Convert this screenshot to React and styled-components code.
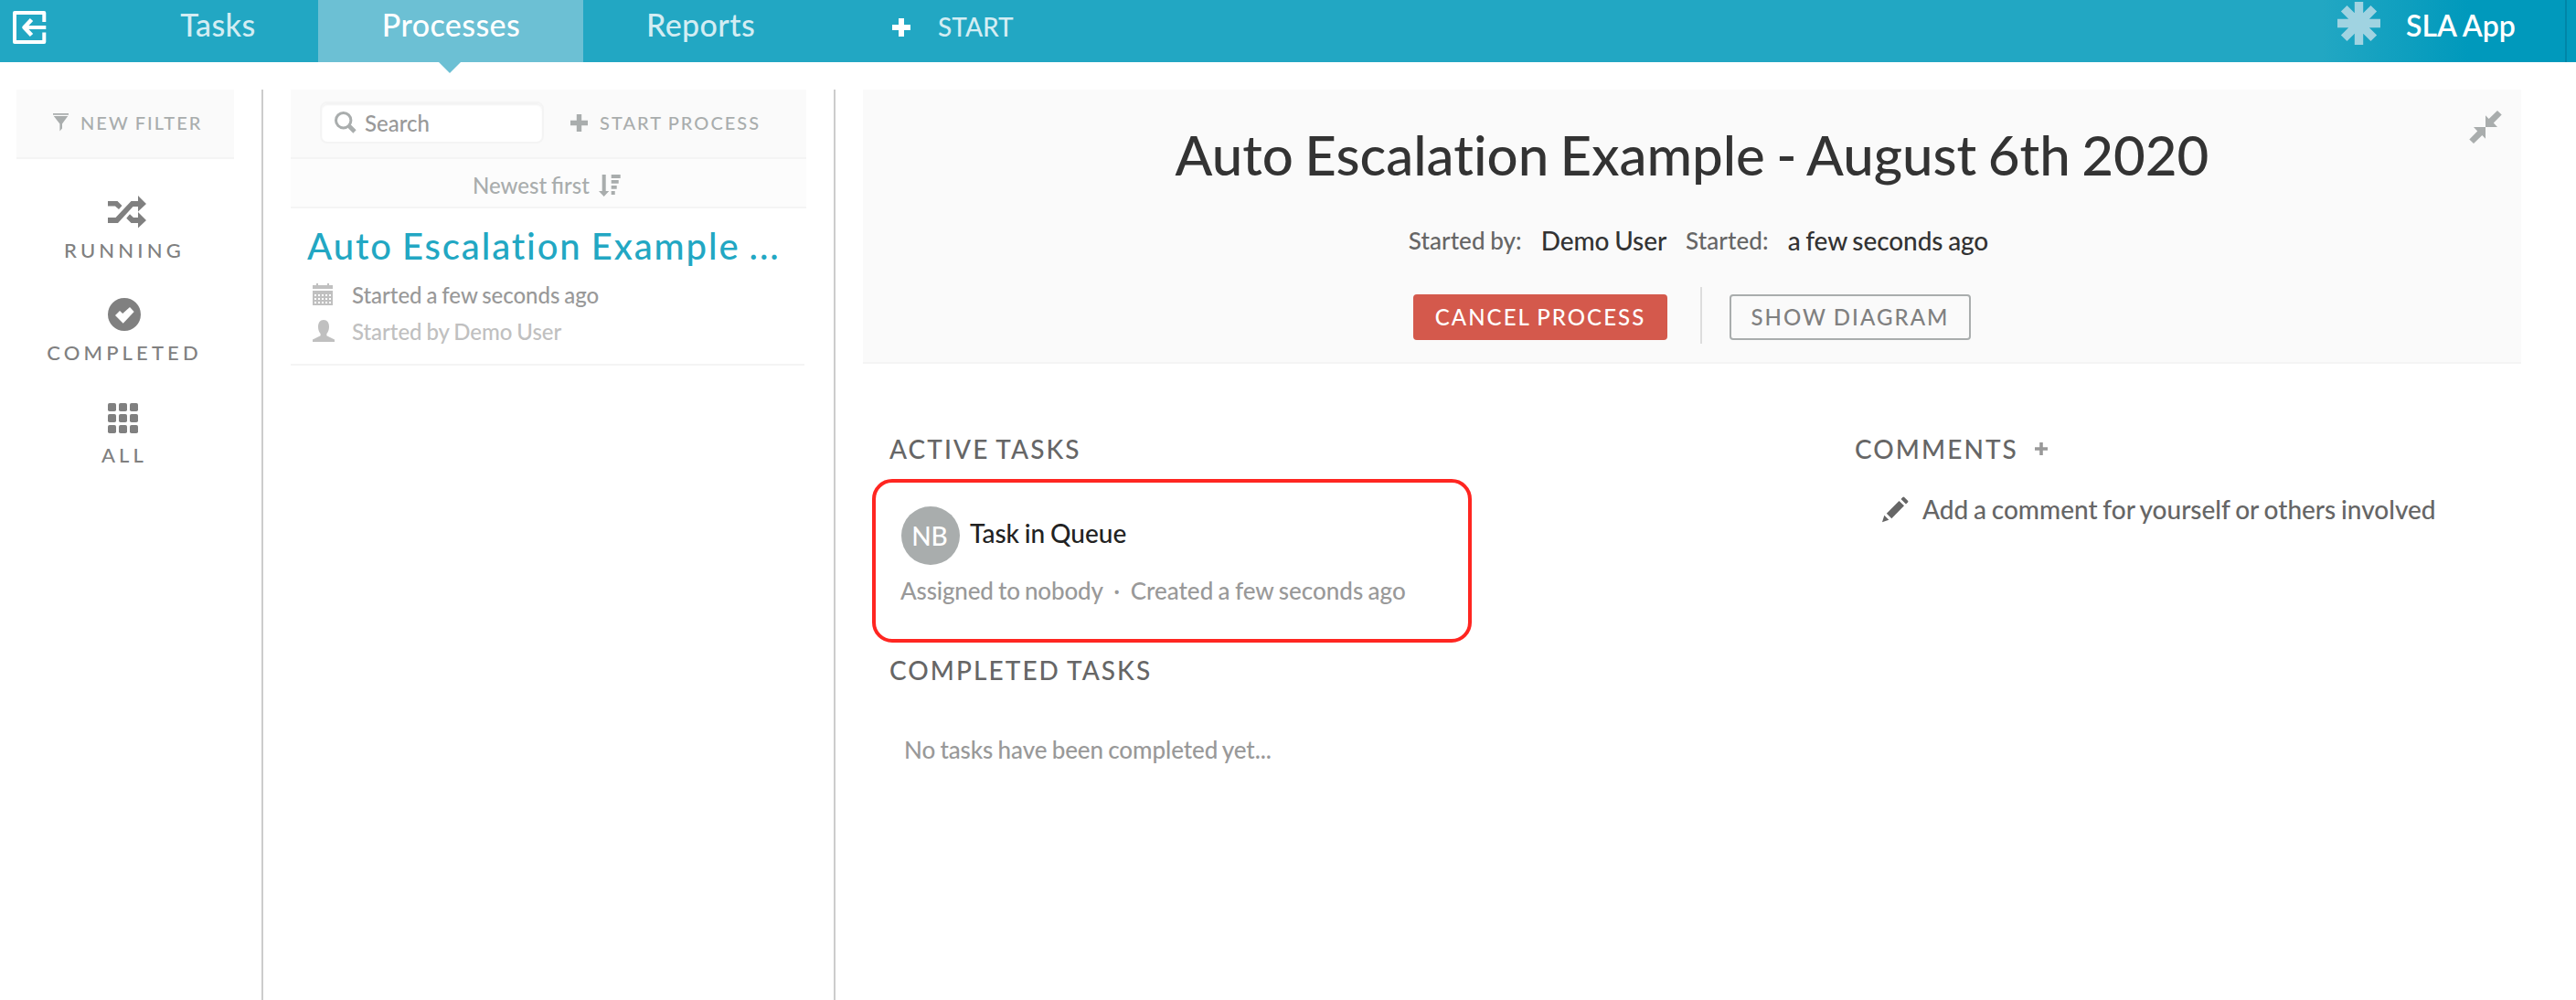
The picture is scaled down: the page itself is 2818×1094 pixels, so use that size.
import React from "react";
import styled, { createGlobalStyle } from "styled-components";

const GlobalStyle = createGlobalStyle`
  * { box-sizing: border-box; word-spacing: -0.046em; }
  body {
    margin: 0;
    background: #fff;
    color: #333;
    font-family: Lato, "Open Sans", sans-serif;
    font-weight: 500;
    font-variant-ligatures: none;
    overflow: hidden;
  }
  svg { display: block; flex: none; overflow: visible; }
  h1, h2, h3, p { margin: 0; font-weight: inherit; }
  button { font-family: inherit; font-weight: inherit; cursor: pointer; }
`;

/* ---------- layout ---------- */

const Page = styled.div`
  display: flex;
  flex-direction: column;
  height: 1094px;
  white-space: nowrap;
`;

const Header = styled.header`
  display: flex;
  flex: none;
  height: 68px;
  background: linear-gradient(to right, #22a7c3 0, #22a7c3 2540px, #0099bc 2700px);
  color: #d3edf3;
`;

const Body = styled.div`
  display: flex;
  flex: 1;
  padding-top: 30px;
`;

const Sidebar = styled.aside`
  width: 288px;
  padding: 0 30px 0 18px;
  border-right: 2px solid #ccc;
`;

const ListColumn = styled.section`
  width: 626px;
  padding: 0 30px;
  border-right: 2px solid #ccc;
`;

const Main = styled.main`
  width: 1814px;
  margin-left: 30px;
`;

/* ---------- header ---------- */

const ExitLink = styled.a`
  width: 128px;
  padding: 12px 0 0 14px;
`;

const Tab = styled.a`
  position: relative;
  width: ${(p) => p.$width}px;
  padding-left: 1px;
  text-align: center;
  font-size: 34px;
  line-height: 54px;
  letter-spacing: 0.4px;
  background: ${(p) => (p.$active ? "#6cc0d4" : "transparent")};
  color: ${(p) => (p.$active ? "#fff" : "#d3edf3")};

  &::after {
    content: ${(p) => (p.$active ? '""' : "none")};
    position: absolute;
    top: 68px;
    left: 50%;
    margin-left: -13px;
    border: 12px solid transparent;
    border-top-color: #6cc0d4;
    border-bottom: 0;
  }
`;

const StartLink = styled.a`
  display: flex;
  gap: 30px;
  margin-left: 82px;
  font-size: 28px;
  line-height: 58px;
`;

const StartGlyph = styled.span`
  padding-top: 20px;
`;

const AppBrand = styled.div`
  display: flex;
  gap: 28px;
  width: 251px;
  margin-left: auto;
  border-right: 2px solid #0086a8;
  color: #fff;
  font-size: 32px;
  font-weight: 600;
  line-height: 55px;
  word-spacing: 0;
`;

const BrandMark = styled.span`
  padding-top: 2px;
`;

const HeaderEnd = styled.div`
  width: 10px;
`;

/* ---------- sidebar ---------- */

const FilterButton = styled.a`
  display: flex;
  align-items: center;
  gap: 13px;
  height: 76px;
  padding: 0 0 2px 40px;
  border-bottom: 2px solid #f4f4f4;
  background: #fafafa;
  color: #a9adad;
  font-size: 20px;
  letter-spacing: 2.05px;
`;

const FilterList = styled.nav`
  display: flex;
  flex-direction: column;
  padding-top: 30px;
`;

const FilterItem = styled.a`
  display: flex;
  flex-direction: column;
  align-items: center;
  height: 112px;
  color: #808080;
  font-size: 22px;
  line-height: 31px;
`;

const FilterGlyph = styled.span`
  width: 38px;
  height: 54px;
  padding-top: ${(p) => p.$top}px;
`;

const FilterLabel = styled.span`
  padding-right: 2px;
  letter-spacing: 4.15px;
`;

/* ---------- process list ---------- */

const ListToolbar = styled.div`
  display: flex;
  align-items: center;
  height: 76px;
  padding: 0 0 2px 32px;
  border-bottom: 2px solid #f4f4f4;
  background: #fafafa;
`;

const SearchField = styled.label`
  display: flex;
  align-items: center;
  gap: 9px;
  width: 245px;
  height: 46px;
  padding-left: 14px;
  border: 2px solid #f4f4f4;
  border-radius: 8px;
  background: #fff;
  box-shadow: inset 0 2px 2px rgba(0, 0, 0, 0.05);
  color: #999;
  font-size: 24px;
`;

const StartProcess = styled.a`
  display: flex;
  align-items: center;
  gap: 13px;
  margin-left: 29px;
  color: #a9adad;
  font-size: 20px;
  letter-spacing: 2.03px;
`;

const SortBar = styled.div`
  display: flex;
  align-items: center;
  gap: 10px;
  height: 54px;
  padding: 5px 0 0 199px;
  border-bottom: 2px solid #f4f4f4;
  background: #fcfcfc;
  color: #a9adad;
  font-size: 24px;
  font-variant-ligatures: common-ligatures;
`;

const ProcessItem = styled.article`
  width: 562px;
  padding: 17px 0 15px 18px;
  border-bottom: 2px solid #f4f4f4;
`;

const ItemTitle = styled.h3`
  margin-bottom: 8px;
  color: #22a7c3;
  font-size: 40px;
  line-height: 49px;
  letter-spacing: 1.88px;
`;

const ItemMeta = styled.div`
  display: grid;
  grid-template-columns: 43px auto;
  align-items: center;
  height: 40px;
  padding-left: 6px;
  color: ${(p) => (p.$faded ? "#c0c0c0" : "#999")};
  font-size: 24px;
  letter-spacing: -0.04px;
`;

const MetaList = styled.div`
  padding-bottom: 1px;
`;

/* ---------- process details ---------- */

const Summary = styled.header`
  position: relative;
  display: flex;
  flex-direction: column;
  align-items: center;
  height: 300px;
  padding-top: 35px;
  border-bottom: 2px solid #f4f4f4;
  background: #fafafa;
`;

const CollapseButton = styled.a`
  position: absolute;
  top: 23px;
  right: 21px;
  color: #a9adad;
`;

const Title = styled.h1`
  color: #333;
  font-size: 60px;
  line-height: 72px;
`;

const Facts = styled.div`
  display: flex;
  align-items: center;
  height: 34px;
  margin-top: 41px;
  padding-left: 14px;
  gap: 21px;
`;

const FactLabel = styled.span`
  color: #666;
  font-size: 26px;
  letter-spacing: 0.1px;
`;

const FactValue = styled.span`
  color: #333;
  font-size: 28px;
  letter-spacing: -0.08px;
`;

const Actions = styled.div`
  display: flex;
  margin-top: 34px;
`;

const Divider = styled.div`
  width: 2px;
  height: 62px;
  margin: 0 30px 0 36px;
  background: #ddd;
`;

const Button = styled.button`
  width: ${(p) => p.$width}px;
  height: 50px;
  margin-top: 8px;
  padding: 0 0 2px 0;
  border: 2px solid ${(p) => (p.$danger ? "#d4594c" : "#a9adad")};
  border-radius: 4px;
  background: ${(p) => (p.$danger ? "#d4594c" : "transparent")};
  color: ${(p) => (p.$danger ? "#fff" : "#808080")};
  font-size: 24px;
  letter-spacing: 2.05px;
`;

const Details = styled.div`
  display: grid;
  grid-template-columns: 1085px 1fr;
  padding-top: 76px;
`;

const SectionTitle = styled.h2`
  display: flex;
  align-items: center;
  gap: 18px;
  height: 34px;
  margin-left: ${(p) => p.$indent || 0}px;
  color: #666;
  font-size: 28px;
  letter-spacing: 2.06px;
`;

const TaskCard = styled.article`
  width: 656px;
  height: 179px;
  margin: 16px 0 13px 10px;
  padding: 26px 0 0 28px;
  border: 4px solid #ff2621;
  border-radius: 22px;
`;

const TaskHead = styled.div`
  display: flex;
  align-items: center;
  gap: 11px;
`;

const Avatar = styled.span`
  display: flex;
  align-items: center;
  justify-content: center;
  width: 64px;
  height: 64px;
  padding-right: 2px;
  border-radius: 50%;
  background: #a9adad;
  color: #fff;
  font-size: 28px;
`;

const TaskName = styled.h3`
  padding-bottom: 7px;
  color: #222;
  font-size: 28px;
`;

const TaskInfo = styled.div`
  display: flex;
  gap: 11.5px;
  margin: 12px 0 0 -1px;
  color: #999;
  font-size: 26px;
  line-height: 32px;
`;

const Assignee = styled.span`
  letter-spacing: -0.17px;
`;

const EmptyNote = styled.p`
  margin: 54px 0 0 45px;
  color: #999;
  font-size: 26px;
  line-height: 32px;
  letter-spacing: -0.09px;
`;

const CommentPrompt = styled.div`
  display: flex;
  align-items: center;
  gap: 15px;
  height: 34px;
  margin: 32px 0 0 30px;
  color: #666;
  font-size: 28px;
`;

/* ---------- icons ---------- */

const Icon = ({ w, h, children }) => (
  <svg width={w} height={h} viewBox={`0 0 ${w} ${h}`} fill="currentColor" aria-hidden="true">
    {children}
  </svg>
);

const PlusIcon = ({ size, weight, color = "currentColor" }) => (
  <Icon w={size} h={size}>
    <path
      d={`M${size / 2} 0V${size}M0 ${size / 2}H${size}`}
      stroke={color}
      strokeWidth={weight}
      fill="none"
    />
  </Icon>
);

const ExitIcon = () => (
  <Icon w={36} h={36}>
    <g fill="none" stroke="#fff" strokeWidth="4" strokeLinejoin="round">
      <path d="M34.3 12V2H2V34H34.3V23.5" />
      <path d="M36.3 18H14" />
      <path d="M20.5 9.5L12.5 18L20.5 26.5" strokeWidth="4.6" />
    </g>
  </Icon>
);

const AsteriskIcon = () => (
  <Icon w={47} h={47}>
    <path
      d="M23.5 0V47M0 23.5H47M7.2 7.2L39.8 39.8M39.8 7.2L7.2 39.8"
      stroke="#a0d3e1"
      strokeWidth="9.4"
      fill="none"
    />
  </Icon>
);

const FunnelIcon = () => (
  <Icon w={17} h={20}>
    <path d="M0 0H17V1.8H0ZM.8 3H16.2L10 11.5V16.5L7.4 19.5V11.5Z" />
  </Icon>
);

const ShuffleIcon = () => (
  <Icon w={42} h={35}>
    <path d="M0 6H10.5L15.5 11L12 15L8 11.5H0Z" />
    <path d="M0 24H8.5L25.5 6H33V0L42 9L33 17.5V12H27.5L11 30H0Z" />
    <path d="M24 20.3L28 24H33V18L42 27L33 35.5V30H25.5L20.3 24.8Z" />
  </Icon>
);

const CheckIcon = () => (
  <Icon w={36} h={36}>
    <path
      fillRule="evenodd"
      d="M18 0A18 18 0 1 1 18 36A18 18 0 1 1 18 0ZM8 19L16.7 27.7L28.7 15L24 10L16.2 17L13 14Z"
    />
  </Icon>
);

const GridIcon = () => (
  <Icon w={33} h={33}>
    {[0, 12, 24].map((y) =>
      [0, 12, 24].map((x) => <rect key={`${x}-${y}`} x={x} y={y} width="9" height="9" rx="1.8" />)
    )}
  </Icon>
);

const SearchIcon = () => (
  <Icon w={24} h={24}>
    <g fill="none" stroke="#a9adad">
      <circle cx="9.7" cy="9.7" r="8.2" strokeWidth="3" />
      <path d="M15.5 15.5L22 22" strokeWidth="4.6" />
    </g>
  </Icon>
);

const SortIcon = () => (
  <Icon w={24} h={24}>
    <path d="M3.7 0H7.7V18H11.3L5.7 24L0 18H3.7Z" />
    <path d="M13.7 0H23.7V4H13.7ZM13.7 6H21.7V9.8H13.7ZM13.7 12H19.7V15.8H13.7ZM13.7 18H17.7V22H13.7Z" />
  </Icon>
);

const CalendarIcon = () => (
  <Icon w={22} h={24}>
    <g fill="#c0c0c0">
      <path d="M4 0H6V2H16V0H18V2H22V6H0V2H4ZM0 8H22V24H0Z" />
    </g>
    <g fill="#fff">
      {[12, 16, 20].map((y) =>
        [2, 6, 10, 14, 18].map((x) => <rect key={`${x}-${y}`} x={x} y={y} width="2" height="2" />)
      )}
    </g>
  </Icon>
);

const UserIcon = () => (
  <Icon w={24} h={24}>
    <path d="M12 0C16 0 18 3 18 7.5C18 11 16.8 13.6 15.4 15V17.2L24 21.5V24H0V21.5L8.6 17.2V15C7.2 13.6 6 11 6 7.5C6 3 8 0 12 0Z" />
  </Icon>
);

const CollapseIcon = () => (
  <Icon w={36} h={36}>
    <path d="M18 5.3L21.7 9L31 0L35.7 4.5L26.8 13.6L31 18H18Z" />
    <path d="M18 5.3L21.7 9L31 0L35.7 4.5L26.8 13.6L31 18H18Z" transform="rotate(180 18 18)" />
  </Icon>
);

const PencilIcon = () => (
  <Icon w={29} h={29}>
    <path d="M0 28.3L2.3 20.7L7.3 25.7Z" />
    <path d="M4.8 18.8L18.5 5L24 10.3L10.3 24.2Z" />
    <path d="M20.5 3L22.4 .9Q23.2 0 24.2 .9L28 4.7Q28.9 5.6 28.1 6.4L26 8.5Z" />
  </Icon>
);

/* ---------- page ---------- */

const FILTERS = [
  { label: "RUNNING", Glyph: ShuffleIcon, top: 10 },
  { label: "COMPLETED", Glyph: CheckIcon, top: 10 },
  { label: "ALL", Glyph: GridIcon, top: 13 },
];

export default function App() {
  return (
    <Page>
      <GlobalStyle />
      <Header>
        <ExitLink><ExitIcon /></ExitLink>
        <Tab $width={220}>Tasks</Tab>
        <Tab $width={290} $active>Processes</Tab>
        <Tab $width={256}>Reports</Tab>
        <StartLink>
          <StartGlyph><PlusIcon size={20} weight={6} color="#fff" /></StartGlyph>
          START
        </StartLink>
        <AppBrand>
          <BrandMark><AsteriskIcon /></BrandMark>
          SLA App
        </AppBrand>
        <HeaderEnd />
      </Header>

      <Body>
        <Sidebar>
          <FilterButton><FunnelIcon />NEW FILTER</FilterButton>
          <FilterList>
            {FILTERS.map(({ label, Glyph, top }) => (
              <FilterItem key={label}>
                <FilterGlyph $top={top}><Glyph /></FilterGlyph>
                <FilterLabel>{label}</FilterLabel>
              </FilterItem>
            ))}
          </FilterList>
        </Sidebar>

        <ListColumn>
          <ListToolbar>
            <SearchField><SearchIcon />Search</SearchField>
            <StartProcess><PlusIcon size={19} weight={5.4} />START PROCESS</StartProcess>
          </ListToolbar>
          <SortBar>Newest first<SortIcon /></SortBar>
          <ProcessItem>
            <ItemTitle>Auto Escalation Example ...</ItemTitle>
            <MetaList>
              <ItemMeta><CalendarIcon />Started a few seconds ago</ItemMeta>
              <ItemMeta $faded><UserIcon />Started by Demo User</ItemMeta>
            </MetaList>
          </ProcessItem>
        </ListColumn>

        <Main>
          <Summary>
            <CollapseButton><CollapseIcon /></CollapseButton>
            <Title>Auto Escalation Example - August 6th 2020</Title>
            <Facts>
              <FactLabel>Started by:</FactLabel>
              <FactValue>Demo User</FactValue>
              <FactLabel>Started:</FactLabel>
              <FactValue>a few seconds ago</FactValue>
            </Facts>
            <Actions>
              <Button $width={278} $danger>CANCEL PROCESS</Button>
              <Divider />
              <Button $width={264}>SHOW DIAGRAM</Button>
            </Actions>
          </Summary>

          <Details>
            <section>
              <SectionTitle $indent={29}>ACTIVE TASKS</SectionTitle>
              <TaskCard>
                <TaskHead>
                  <Avatar>NB</Avatar>
                  <TaskName>Task in Queue</TaskName>
                </TaskHead>
                <TaskInfo>
                  <Assignee>Assigned to nobody</Assignee>
                  <span>·</span>
                  <span>Created a few seconds ago</span>
                </TaskInfo>
              </TaskCard>
              <SectionTitle $indent={29}>COMPLETED TASKS</SectionTitle>
              <EmptyNote>No tasks have been completed yet...</EmptyNote>
            </section>
            <section>
              <SectionTitle>
                COMMENTS
                <PlusIcon size={14} weight={3.6} color="#999" />
              </SectionTitle>
              <CommentPrompt>
                <PencilIcon />
                Add a comment for yourself or others involved
              </CommentPrompt>
            </section>
          </Details>
        </Main>
      </Body>
    </Page>
  );
}
